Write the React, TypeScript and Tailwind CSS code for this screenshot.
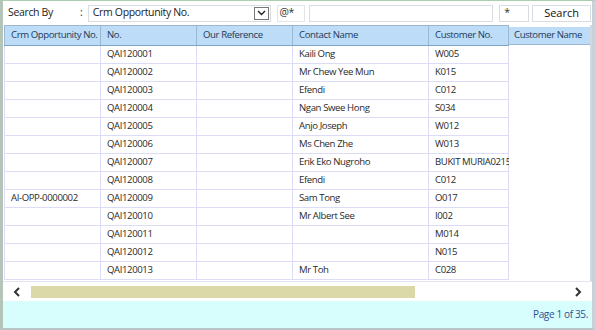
import React from "react";

const rows = [
  { opp: "", no: "QAI120001", ref: "", contact: "Kaili Ong", cust: "W005" },
  { opp: "", no: "QAI120002", ref: "", contact: "Mr Chew Yee Mun", cust: "K015" },
  { opp: "", no: "QAI120003", ref: "", contact: "Efendi", cust: "C012" },
  { opp: "", no: "QAI120004", ref: "", contact: "Ngan Swee Hong", cust: "S034" },
  { opp: "", no: "QAI120005", ref: "", contact: "Anjo Joseph", cust: "W012" },
  { opp: "", no: "QAI120006", ref: "", contact: "Ms Chen Zhe", cust: "W013" },
  { opp: "", no: "QAI120007", ref: "", contact: "Erik Eko Nugroho", cust: "BUKIT MURIA0215" },
  { opp: "", no: "QAI120008", ref: "", contact: "Efendi", cust: "C012" },
  { opp: "AI-OPP-0000002", no: "QAI120009", ref: "", contact: "Sam Tong", cust: "O017" },
  { opp: "", no: "QAI120010", ref: "", contact: "Mr Albert See", cust: "I002" },
  { opp: "", no: "QAI120011", ref: "", contact: "", cust: "M014" },
  { opp: "", no: "QAI120012", ref: "", contact: "", cust: "N015" },
  { opp: "", no: "QAI120013", ref: "", contact: "Mr Toh", cust: "C028" },
];

const cols = [
  { label: "Crm Opportunity No.", w: "w-[96px]", key: "opp" },
  { label: "No.", w: "w-[96px]", key: "no" },
  { label: "Our Reference", w: "w-[96px]", key: "ref" },
  { label: "Contact Name", w: "w-[136px]", key: "contact" },
  { label: "Customer No.", w: "w-[80px]", key: "cust" },
] as const;

export default function App() {
  return (
    <div
      className="w-[595px] h-[330px] bg-white text-[10px] tracking-[-0.35px] text-[#333] flex flex-col overflow-hidden border-t border-t-[#a9cfb0] border-l-[3px] border-l-[#b4c4b8] border-r-[3px] border-r-[#c8d0d8] border-b-2 border-b-[#b8c4c8]"
      style={{ fontFamily: '"Open Sans", "Noto Sans", sans-serif' }}
    >
      {/* Search toolbar */}
      <div className="h-[24px] flex items-center pl-[5px] pr-[1px] shrink-0 text-[10.5px]">
        <span className="w-[72px] text-[#222]">Search By</span>
        <span className="w-[8px] text-[#222]">:</span>
        <div className="w-[183px] h-[17px] border border-[#d9dde2] flex items-center pl-[4px] text-[#222]">
          <span className="flex-1">Crm Opportunity No.</span>
          <span className="w-[15px] h-[13px] mr-[1px] border border-[#777] flex items-center justify-center">
            <svg width="9" height="6" viewBox="0 0 9 6">
              <path d="M1 1 L4.5 4.5 L8 1" stroke="#222" strokeWidth="1.4" fill="none" />
            </svg>
          </span>
        </div>
        <div className="w-[29px] h-[17px] ml-[6px] border border-[#e2e6ea] flex items-center pl-[2px] text-[#333]">@*</div>
        <div className="w-[184px] h-[17px] ml-[4px] border border-[#d9dde2]" />
        <div className="w-[30px] h-[17px] ml-[6px] border border-[#d9dde2] flex items-center pl-[4px] text-[#333]">*</div>
        <div className="w-[59px] h-[17px] ml-[3px] border border-[#d9dde2] flex items-center justify-center text-[#111] text-[11px] tracking-normal">
          Search
        </div>
      </div>

      {/* Grid */}
      <div className="flex flex-1 min-h-0">
        <table className="border-collapse table-fixed w-[504px] self-start ml-[1px] text-[9.6px] tracking-[-0.4px]">
          <thead>
            <tr className="h-[20px] bg-[#bcdcf8]">
              {cols.map((c) => (
                <th
                  key={c.key}
                  className={`${c.w} text-left font-normal text-[#1e3a5a] pl-[6px] pr-0 border-x border-x-[#9db7cf] border-t border-t-[#9db7cf] border-b border-b-[#7fa3c2] whitespace-nowrap`}
                >
                  {c.label}
                </th>
              ))}
            </tr>
          </thead>
          <tbody>
            {rows.map((r, i) => (
              <tr key={i} className="h-[18px]">
                {cols.map((c) => (
                  <td
                    key={c.key}
                    className="pl-[6px] pr-0 border border-[#dddcf6] whitespace-nowrap text-[#2a2a2a]"
                  >
                    {r[c.key]}
                  </td>
                ))}
              </tr>
            ))}
          </tbody>
        </table>
        <div className="flex-1 flex flex-col pt-[2px]">
          <div className="h-[18px] bg-[#bcdcf8] border-b border-b-[#9db7cf] pl-[5px] flex items-center text-[#1e3a5a] text-[9.6px] tracking-[-0.4px] whitespace-nowrap overflow-hidden">
            Customer Name
          </div>
          <div className="flex-1 bg-white" />
        </div>
        <div className="w-[2px] bg-[#d0d8e0]" />
      </div>

      {/* Horizontal scroller */}
      <div className="h-[20px] flex items-center shrink-0 border-t border-t-[#e4e4f4]">
        <div className="w-[28px] flex justify-center">
          <svg width="8" height="10" viewBox="0 0 8 10">
            <path d="M6 1 L2 5 L6 9" stroke="#333" strokeWidth="2" fill="none" />
          </svg>
        </div>
        <div className="w-[384px] h-[12px] bg-[#dcd9a8]" />
        <div className="flex-1" />
        <div className="w-[28px] flex justify-center">
          <svg width="8" height="10" viewBox="0 0 8 10">
            <path d="M2 1 L6 5 L2 9" stroke="#333" strokeWidth="2" fill="none" />
          </svg>
        </div>
      </div>

      {/* Footer */}
      <div className="h-[27px] bg-[#d8fdfd] flex items-center justify-end pr-[4px] text-[#2f4f8f] shrink-0">
        Page 1 of 35.
      </div>
    </div>
  );
}
